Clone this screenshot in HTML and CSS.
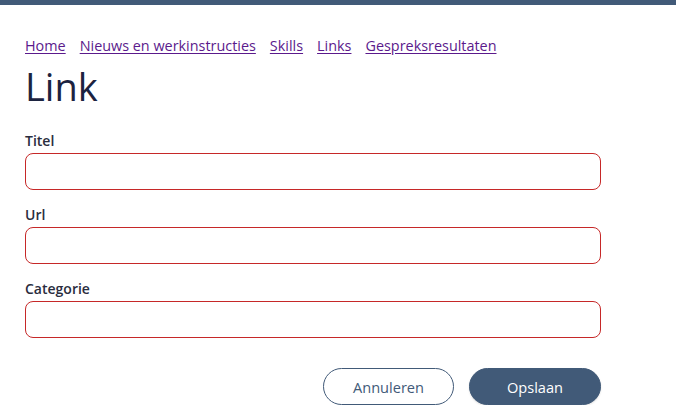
FILE: index.html
```html
<!DOCTYPE html>
<html lang="nl">
<head>
<meta charset="utf-8">
<title>Link</title>
<link rel="stylesheet" href="styles.css">
</head>
<body>
<div class="topbar"></div>
<main class="page">
  <nav class="crumbs">
    <a href="#">Home</a>
    <a href="#">Nieuws en werkinstructies</a>
    <a href="#">Skills</a>
    <a href="#">Links</a>
    <a href="#">Gespreksresultaten</a>
  </nav>
  <h1 class="title">Link</h1>
  <form class="form">
    <div class="field">
      <label class="label" for="titel">Titel</label>
      <input class="input" id="titel" type="text">
    </div>
    <div class="field">
      <label class="label" for="url">Url</label>
      <input class="input" id="url" type="text">
    </div>
    <div class="field">
      <label class="label" for="cat">Categorie</label>
      <input class="input" id="cat" type="text">
    </div>
    <div class="actions">
      <button type="button" class="btn btn-outline">Annuleren</button>
      <button type="button" class="btn btn-primary">Opslaan</button>
    </div>
  </form>
</main>
</body>
</html>
```
FILE: styles.css
```css
* { box-sizing: border-box; }
html, body { margin: 0; padding: 0; background: #fff; }
body { font-family: "Open Sans", sans-serif; color: #1c2340; }
.topbar { height: 5px; background: #415a78; }
.page { width: 576px; margin-left: 25px; padding-top: 31px; }
.crumbs { display: flex; gap: 14px; font-size: 14.4px; line-height: 20px; }
.crumbs a { color: #5b1a8c; text-decoration: underline; text-underline-offset: 2px; }
.title { margin: 4px 0 0; font-size: 38px; font-weight: 500; line-height: 52px; color: #1c2340; }
.form { margin-top: 21px; display: flex; flex-direction: column; gap: 17px; }
.field { display: flex; flex-direction: column; gap: 4px; }
.label { font-size: 14px; font-weight: 600; line-height: 16px; color: #2a2d3e; }
.input { height: 37px; width: 100%; border: 1px solid #c62828; border-radius: 8px; font: inherit; padding: 0 12px; background: #fff; }
.actions { display: flex; justify-content: flex-end; gap: 15px; margin-top: 13px; }
.btn { height: 37px; width: 132px; border-radius: 19px; font-family: "Open Sans", sans-serif; font-size: 14.6px; cursor: pointer; }
.btn-outline { background: #fff; border: 1px solid #415a78; color: #415a78; width: 131px; }
.btn-primary { background: #415a78; border: 1px solid #415a78; color: #fff; font-weight: 500; box-shadow: 0 1px 2px rgba(0,0,0,0.12); }
```
